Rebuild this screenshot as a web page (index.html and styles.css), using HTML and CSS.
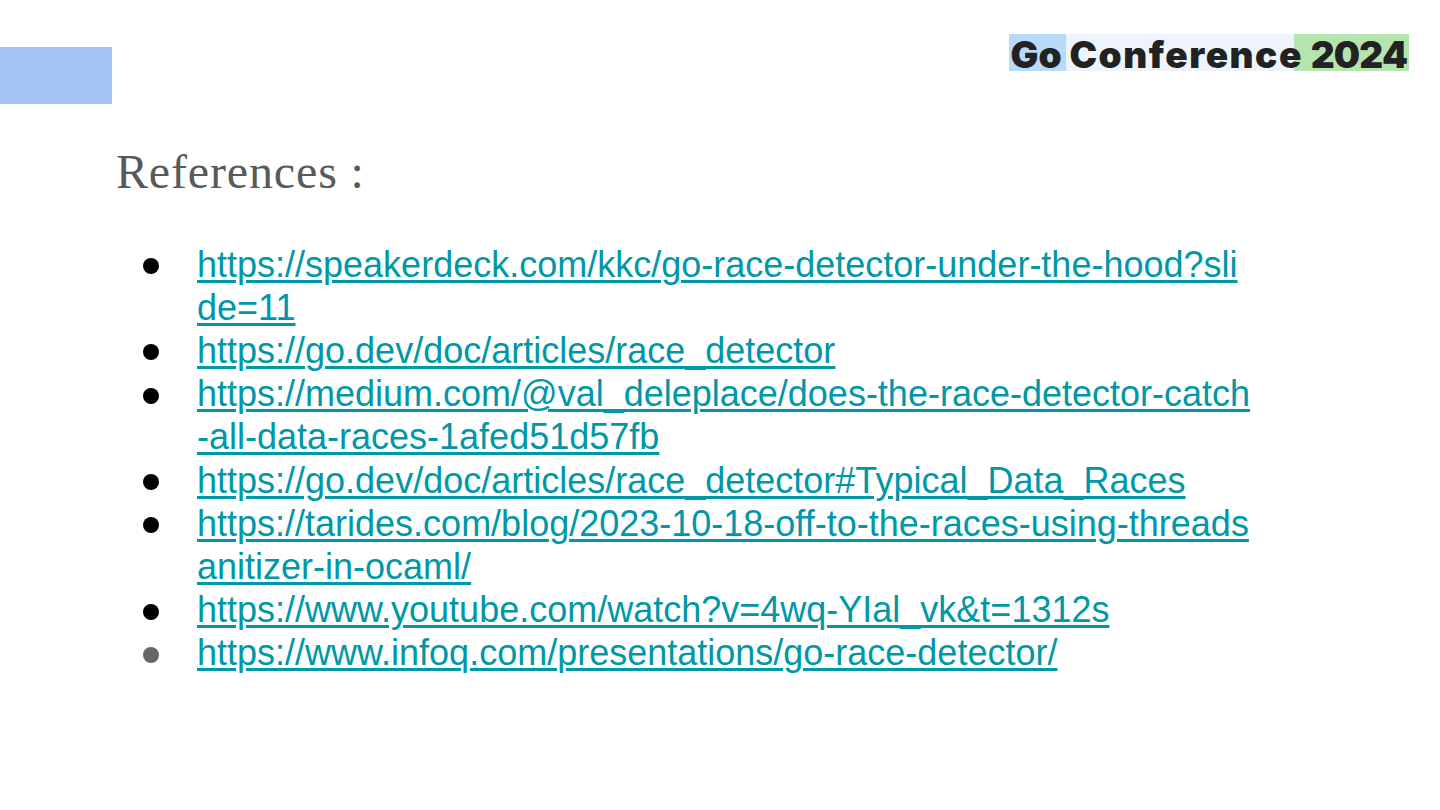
FILE: index.html
```html
<!DOCTYPE html>
<html lang="en">
<head>
<meta charset="utf-8">
<title>References</title>
<link rel="stylesheet" href="styles.css">
</head>
<body>
<main class="slide">
  <header class="top">
    <div class="accent"></div>
    <div class="logo"><span class="logo-go">Go</span> <span class="logo-conf">Conference</span> <span class="logo-year">2024</span></div>
  </header>
  <h1 class="title">References :</h1>
  <ul class="refs">
    <li><a href="#">https://speakerdeck.com/kkc/go-race-detector-under-the-hood?slide=11</a></li>
    <li><a href="#">https://go.dev/doc/articles/race_detector</a></li>
    <li><a href="#">https://medium.com/@val_deleplace/does-the-race-detector-catch-all-data-races-1afed51d57fb</a></li>
    <li><a href="#">https://go.dev/doc/articles/race_detector#Typical_Data_Races</a></li>
    <li><a href="#">https://tarides.com/blog/2023-10-18-off-to-the-races-using-threadsanitizer-in-ocaml/</a></li>
    <li><a href="#">https://www.youtube.com/watch?v=4wq-YIal_vk&amp;t=1312s</a></li>
    <li class="muted"><a href="#">https://www.infoq.com/presentations/go-race-detector/</a></li>
  </ul>
</main>
</body>
</html>
```
FILE: styles.css
```css
* { box-sizing: border-box; }
html, body { margin: 0; padding: 0; background: #fff; }
.slide { width: 1440px; height: 810px; overflow: hidden; background: #fff; }
.top { display: flex; justify-content: space-between; align-items: flex-start; padding: 34px 31px 0 0; height: 104px; }
.accent { width: 112px; height: 57px; margin-top: 13px; background: #a4c2f4; }
.logo { width: 400px; height: 37px; padding-left: 1.5px; font-family: "Inter", sans-serif; font-weight: 900; font-size: 37px; line-height: 41px; color: #222; white-space: nowrap; word-spacing: 0.5px; background: linear-gradient(90deg, #b7dafb 57px, #edf4fb 57px, #edf4fb 285px, #b6e4ae 285px); }
.logo-conf { letter-spacing: 1.5px; }
.logo-year { letter-spacing: -0.8px; }
.title { margin: 40px 0 0 116px; font-family: "Liberation Serif", serif; font-weight: 400; font-size: 48px; line-height: 55px; letter-spacing: 0.85px; color: #595959; }
.refs { margin: 43.6px 0 0; padding: 0 0 0 197px; width: 1253px; list-style: none; font-family: "Liberation Sans", Arial, sans-serif; font-size: 36px; line-height: 43.2px; word-break: break-all; }
.refs li { position: relative; }
.refs li::before { content: ""; position: absolute; left: -54px; top: 15.4px; width: 16px; height: 16px; border-radius: 50%; background: #000; }
.refs li.muted::before { background: #666; }
.refs a { color: #0097a7; text-decoration: underline; text-decoration-thickness: 3px; text-underline-offset: 3px; }
```
